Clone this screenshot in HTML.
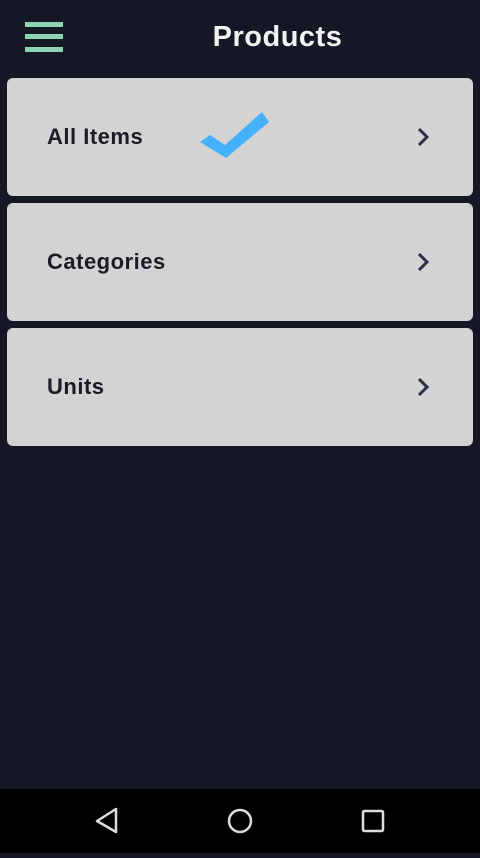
<!DOCTYPE html>
<html><head><meta charset="utf-8"><style>
html,body{margin:0;padding:0;width:480px;height:853px;background:#141824;overflow:hidden;font-family:"Liberation Sans",sans-serif}
.title{position:absolute;left:0;width:555px;top:21px;text-align:center;color:#f2f2f2;font-weight:bold;font-size:29px;letter-spacing:0.5px}
.bar{position:absolute;left:25px;width:38px;height:5px;background:#8fd3b5}
.card{position:absolute;left:7px;width:466px;height:118px;background:#d3d3d3;border-radius:6px}
.card span{position:absolute;left:40px;top:46px;font-size:22px;font-weight:bold;color:#1a1d26;letter-spacing:0.5px}
.card svg.ch{position:absolute;left:409px;top:49px}
.nav{position:absolute;left:0;top:789px;width:480px;height:64px;background:#000}
</style></head><body>
<div class="bar" style="top:22px"></div><div class="bar" style="top:34px"></div><div class="bar" style="top:47px"></div>
<div class="title">Products</div>
<div class="card" style="top:78px"><span>All Items</span>
<svg style="position:absolute;left:0;top:0" width="466" height="118"><polygon points="193,64 203,57 218,67 255,34 262,44 219,80" fill="#45b1fb"/></svg>
<svg class="ch" width="14" height="20"><path d="M3 2 L11 10 L3 18" stroke="#2a2f45" stroke-width="3" fill="none"/></svg></div>
<div class="card" style="top:203px"><span>Categories</span><svg class="ch" width="14" height="20"><path d="M3 2 L11 10 L3 18" stroke="#2a2f45" stroke-width="3" fill="none"/></svg></div>
<div class="card" style="top:328px"><span>Units</span><svg class="ch" width="14" height="20"><path d="M3 2 L11 10 L3 18" stroke="#2a2f45" stroke-width="3" fill="none"/></svg></div>
<div class="nav"><svg width="480" height="64">
<path d="M116 20 L97 32 L116 43 Z" stroke="#ddd" stroke-width="2.5" fill="none" stroke-linejoin="round"/>
<circle cx="240" cy="32" r="11" stroke="#ddd" stroke-width="2.5" fill="none"/>
<rect x="363" y="22" width="20" height="20" rx="1.5" stroke="#ddd" stroke-width="2.5" fill="none"/>
</svg></div>
</body></html>
